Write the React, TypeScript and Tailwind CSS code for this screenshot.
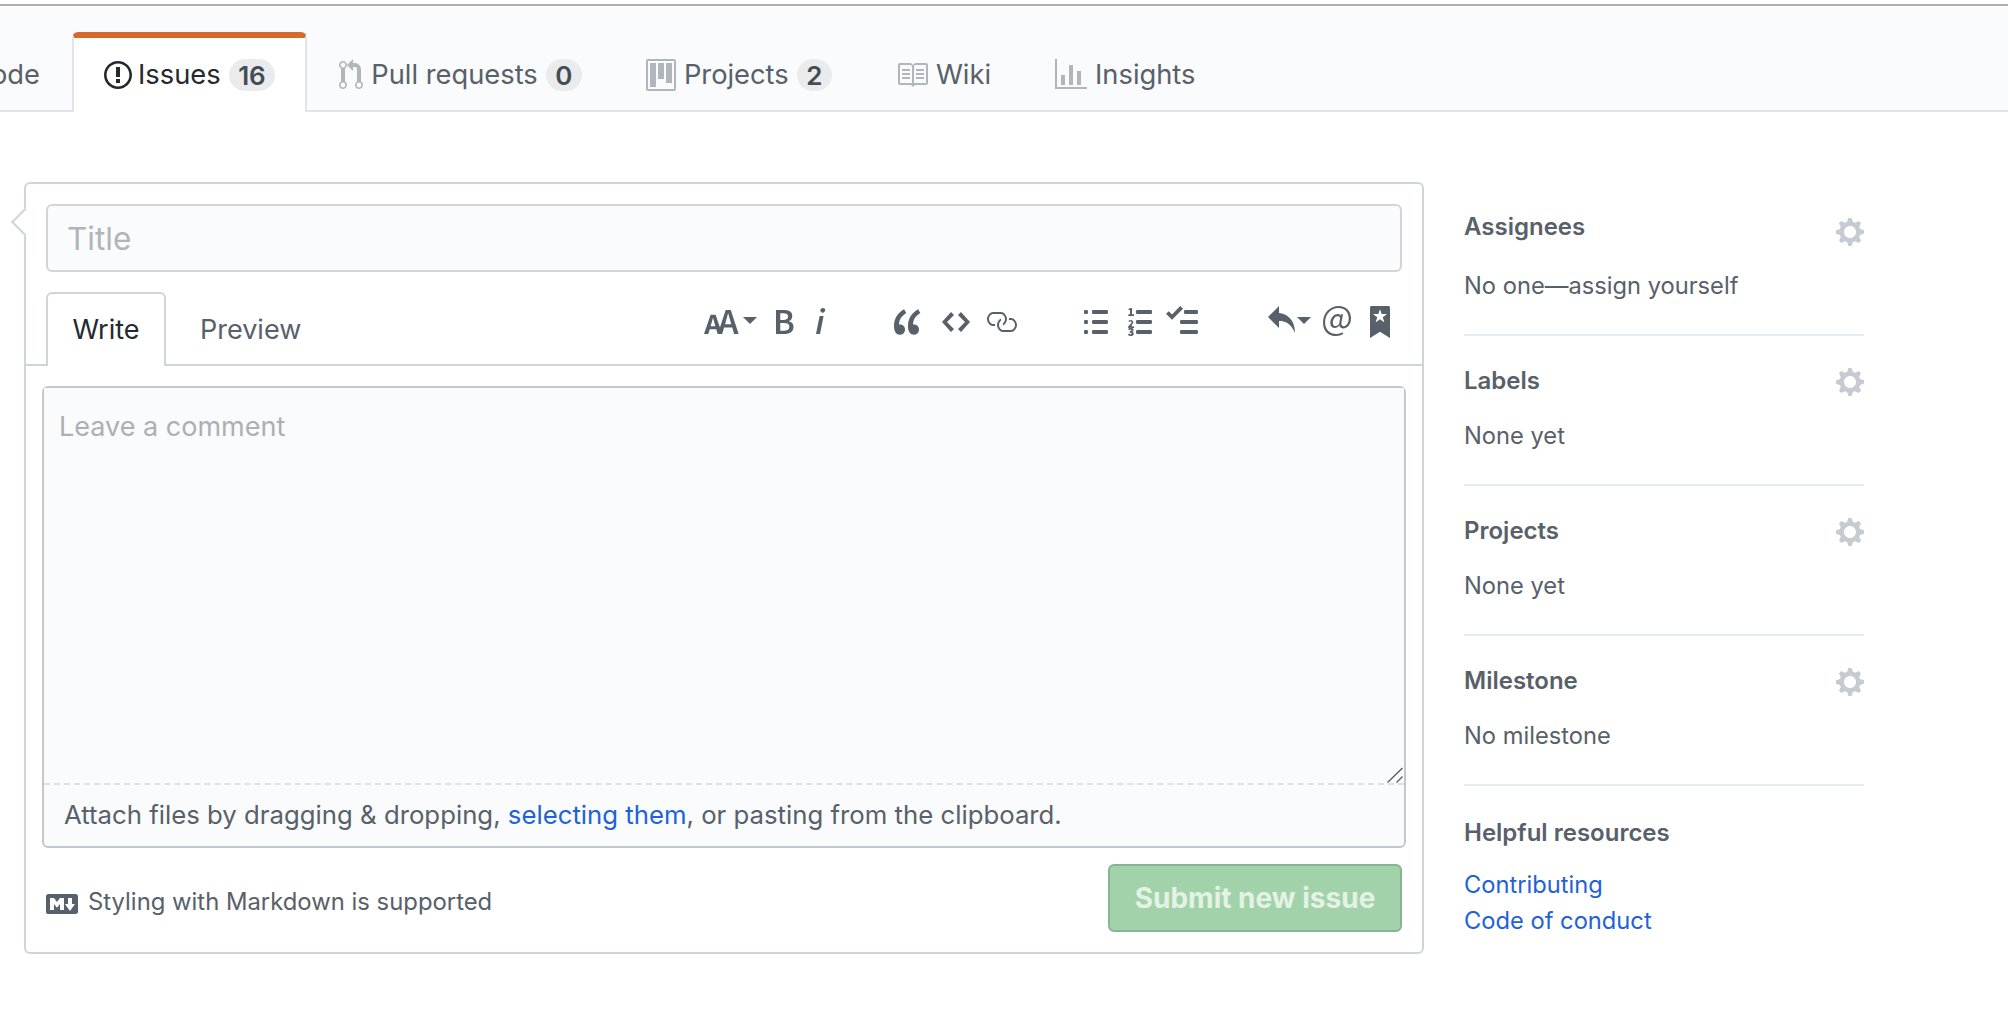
const P: Record<string, [number, string]> = {
  issue: [14, "M7 2.3c3.14 0 5.7 2.56 5.7 5.7s-2.56 5.7-5.7 5.7A5.71 5.71 0 0 1 1.3 8c0-3.14 2.56-5.7 5.7-5.7zM7 1C3.14 1 0 4.14 0 8s3.14 7 7 7 7-3.14 7-7-3.14-7-7-7zm1 3H6v5h2V4zm0 6H6v2h2v-2z"],
  pr: [12, "M11 11.28V5c-.03-.78-.34-1.47-.94-2.06C9.46 2.35 8.78 2.03 8 2H7V0L4 3l3 3V4h1c.27.02.48.11.69.31.21.2.3.42.31.69v6.28A1.993 1.993 0 0 0 10 15a1.993 1.993 0 0 0 1-3.72zm-1 2.92c-.66 0-1.2-.55-1.2-1.2 0-.65.55-1.2 1.2-1.2.65 0 1.2.55 1.2 1.2 0 .65-.55 1.2-1.2 1.2zM4 3c0-1.11-.89-2-2-2a1.993 1.993 0 0 0-1 3.72v6.56A1.993 1.993 0 0 0 2 15a1.993 1.993 0 0 0 1-3.72V4.72c.59-.34 1-.98 1-1.72zm-.8 10c0 .66-.55 1.2-1.2 1.2-.65 0-1.2-.55-1.2-1.2 0-.65.55-1.2 1.2-1.2.65 0 1.2.55 1.2 1.2zM2 4.2C1.34 4.2.8 3.65.8 3c0-.65.55-1.2 1.2-1.2.65 0 1.2.55 1.2 1.2 0 .65-.55 1.2-1.2 1.2z"],
  project: [15, "M10 12h3V2h-3v10zm-4-2h3V2H6v8zm-4 4h3V2H2v12zm-1 1h13V1H1v14zM14 0H1a1 1 0 0 0-1 1v14a1 1 0 0 0 1 1h13a1 1 0 0 0 1-1V1a1 1 0 0 0-1-1z"],
  book: [16, "M3 5h4v1H3V5zm0 3h4V7H3v1zm0 2h4V9H3v1zm11-5h-4v1h4V5zm0 2h-4v1h4V7zm0 2h-4v1h4V9zm2-6v9c0 .55-.45 1-1 1H9.5l-1 1-1-1H2c-.55 0-1-.45-1-1V3c0-.55.45-1 1-1h5.5l1 1 1-1H15c.55 0 1 .45 1 1zm-8 .5L7.5 3H2v9h6V3.5zm7-.5H9.5l-.5.5V12h6V3z"],
  graph: [16, "M16 14v1H0V0h1v14h15zM5 13H3V8h2v5zm4 0H7V3h2v10zm4 0h-2V6h2v7z"],
  textSize: [18, "M13.62 9.08L12.1 3.66h-.06l-1.5 5.42h3.08zM5.7 10.13S4.68 6.52 4.53 6.02h-.08l-1.13 4.11H5.7zM17.31 14h-2.25l-.95-3.25h-4.07L9.09 14H6.84l-.69-2.33H2.87L2.17 14H0l3.3-9.59h2.5l2.17 6.34L10.86 2h2.52l3.94 12h-.01z"],
  bold: [10, "M1 2h3.83c2.48 0 4.3.75 4.3 2.95 0 1.14-.63 2.23-1.67 2.61v.06c1.33.3 2.3 1.23 2.3 2.86 0 2.39-1.97 3.52-4.61 3.52H1V2zm3.66 4.95c1.67 0 2.38-.66 2.38-1.69 0-1.17-.78-1.61-2.34-1.61H3.13v3.3h1.53zm.27 5.39c1.77 0 2.75-.64 2.75-1.98 0-1.27-.95-1.81-2.75-1.81h-1.8v3.8h1.8v-.01z"],
  italic: [6, "M2.81 5h1.98L3 14H1l1.81-9zm.36-2.7c0-.7.58-1.3 1.33-1.3.56 0 1.13.38 1.13 1.03 0 .75-.59 1.3-1.33 1.3-.58 0-1.13-.38-1.13-1.03z"],
  quote: [14, "M6.16 3.5C3.73 5.06 2.55 6.67 2.55 9.36c.16-.05.3-.05.44-.05 1.27 0 2.5.86 2.5 2.41 0 1.61-1.03 2.61-2.5 2.61-1.9 0-2.99-1.52-2.99-4.25 0-3.8 1.75-6.53 5.02-8.42L6.16 3.5zm7 0c-2.43 1.56-3.61 3.17-3.61 5.86.16-.05.3-.05.44-.05 1.27 0 2.5.86 2.5 2.41 0 1.61-1.03 2.61-2.5 2.61-1.89 0-2.98-1.52-2.98-4.25 0-3.8 1.75-6.53 5.02-8.42l1.14 1.84h-.01z"],
  code: [14, "M9.5 3L8 4.5 11.5 8 8 11.5 9.5 13 14 8 9.5 3zm-5 0L0 8l4.5 5L6 11.5 2.5 8 6 4.5 4.5 3z"],
  link: [16, "M4 9h1v1H4c-1.5 0-3-1.69-3-3.5S2.55 3 4 3h4c1.45 0 3 1.69 3 3.5 0 1.41-.91 2.72-2 3.25V8.59c.58-.45 1-1.27 1-2.09C10 5.22 8.98 4 8 4H4c-.98 0-2 1.22-2 2.5S3 9 4 9zm9-3h-1v1h1c1 0 2 1.22 2 2.5S13.98 12 13 12H9c-.98 0-2-1.22-2-2.5 0-.83.42-1.64 1-2.09V6.25c-1.09.53-2 1.84-2 3.25C6 11.31 7.55 13 9 13h4c1.45 0 3-1.69 3-3.5S14.5 6 13 6z"],
  ul: [12, "M2 13c0 .59 0 1-.59 1H.59C0 14 0 13.59 0 13c0-.59 0-1 .59-1h.81c.59 0 .59.41.59 1H2zm2.59-9h6.81c.59 0 .59-.41.59-1 0-.59 0-1-.59-1H4.59C4 2 4 2.41 4 3c0 .59 0 1 .59 1zM1.41 7H.59C0 7 0 7.41 0 8c0 .59 0 1 .59 1h.81c.59 0 .59-.41.59-1 0-.59 0-1-.59-1h.01zm0-5H.59C0 2 0 2.41 0 3c0 .59 0 1 .59 1h.81c.59 0 .59-.41.59-1 0-.59 0-1-.59-1h.01zm10 5H4.59C4 7 4 7.41 4 8c0 .59 0 1 .59 1h6.81c.59 0 .59-.41.59-1 0-.59 0-1-.59-1h.01zm0 5H4.59C4 12 4 12.41 4 13c0 .59 0 1 .59 1h6.81c.59 0 .59-.41.59-1 0-.59 0-1-.59-1h.01z"],
  ol: [12, "M12.01 13c0 .59 0 1-.59 1H4.6c-.59 0-.59-.41-.59-1 0-.59 0-1 .59-1h6.81c.59 0 .59.41.59 1h.01zM4.6 4h6.81C12 4 12 3.59 12 3c0-.59 0-1-.59-1H4.6c-.59 0-.59.41-.59 1 0 .59 0 1 .59 1zm6.81 3H4.6c-.59 0-.59.41-.59 1 0 .59 0 1 .59 1h6.81C12 9 12 8.59 12 8c0-.59 0-1-.59-1zm-9.4-6h-.72c-.3.19-.58.25-1.03.34V2h.75v2.14H.17V5h2.84v-.86h-1V1zm.19 8.75c-.17 0-.42.02-.61.05.48-.5 1.02-1.09 1.02-1.64C2.61 7.47 2.13 7 1.39 7c-.53 0-.88.18-1.24.58l.48.48c.19-.2.38-.38.64-.38.28 0 .48.17.48.5 0 .53-.77 1.14-1.66 2.04V11h3v-.78l-.99.02-.01-.49zm-.08 3.17v-.03c.44-.19.64-.47.64-.86 0-.7-.56-1.11-1.44-1.11-.48 0-.89.19-1.28.52l.55.64c.25-.2.44-.31.69-.31.27 0 .42.13.42.36 0 .27-.2.44-.86.44v.75c.83 0 .98.17.98.47 0 .25-.23.38-.58.38-.28 0-.56-.14-.81-.38l-.48.66c.3.36.77.56 1.41.56.83 0 1.53-.41 1.53-1.16 0-.5-.31-.81-.77-.94v.01z"],
  task: [16, "M15.41 9H7.59C7 9 7 8.59 7 8c0-.59 0-1 .59-1h7.81c.59 0 .59.41.59 1 0 .59 0 1-.59 1h.01zM9.59 4C9 4 9 3.59 9 3c0-.59 0-1 .59-1h5.81c.59 0 .59.41.59 1 0 .59 0 1-.59 1H9.59zM0 3.91l1.41-1.3L3 4.2 7.09 0 8.5 1.41 3 6.91l-3-3zM7.59 12h7.81c.59 0 .59.41.59 1 0 .59 0 1-.59 1H7.59C7 14 7 13.59 7 13c0-.59 0-1 .59-1z"],
  reply: [14, "M6 3.5c3.92.44 8 3.125 8 10-2.312-5.062-4.75-6-8-6V11L.5 5.5 6 0v3.5z"],
  mention: [14, "M6.58 15c1.25 0 2.52-.31 3.56-.94l-.42-.94c-.84.52-1.89.83-3.03.83-3.23 0-5.64-2.08-5.64-5.72 0-4.37 3.23-7.18 6.58-7.18 3.45 0 5.22 2.19 5.22 5.2 0 2.39-1.34 3.86-2.5 3.86-1.05 0-1.36-.73-1.05-2.19l.73-3.75H8.98l-.11.72c-.41-.63-.94-.83-1.56-.83-2.19 0-3.66 2.39-3.66 4.38 0 1.67.94 2.61 2.3 2.61.84 0 1.67-.53 2.3-1.25.11.94.94 1.45 1.98 1.45 1.67 0 3.77-1.67 3.77-5C14 2.61 11.59 0 7.83 0 3.66 0 0 3.33 0 8.33 0 12.71 2.92 15 6.58 15zm-.31-5c-.73 0-1.36-.52-1.36-1.67 0-1.45.94-3.22 2.41-3.22.52 0 .84.2 1.25.83l-.52 3.02c-.63.73-1.25 1.04-1.78 1.04z"],
  bookmark: [10, "M9 0H1C.27 0 0 .27 0 1v15l5-3.09L10 16V1c0-.73-.27-1-1-1zm-.78 4.25L6.36 5.61l.72 2.16c.06.22-.02.28-.2.17L5 6.6 3.12 7.94c-.19.11-.25.05-.2-.17l.72-2.16-1.86-1.36c-.17-.16-.14-.23.09-.23l2.3-.03.7-2.16h.25l.7 2.16 2.3.03c.23 0 .27.08.09.23h.01z"],
  markdown: [16, "M14.85 3H1.15C.52 3 0 3.52 0 4.15v7.69C0 12.48.52 13 1.15 13h13.69c.64 0 1.15-.52 1.15-1.15v-7.7C16 3.52 15.48 3 14.85 3zM9 11H7V8L5.5 9.92 4 8v3H2V5h2l1.5 2L7 5h2v6zm2.99.5L9.5 8H11V5h2v3h1.5l-2.51 3.5z"],
  gear: [14, "M14 8.77v-1.6l-1.94-.64-.45-1.09.88-1.84-1.13-1.13-1.81.91-1.09-.45-.69-1.92h-1.6l-.63 1.94-1.11.45-1.84-.88-1.13 1.13.91 1.81-.45 1.09L0 7.23v1.59l1.94.64.45 1.09-.88 1.84 1.13 1.13 1.81-.91 1.09.45.69 1.92h1.59l.63-1.94 1.11-.45 1.84.88 1.13-1.13-.92-1.81.47-1.09L14 8.75v.02zM7 11c-1.66 0-3-1.34-3-3s1.34-3 3-3 3 1.34 3 3-1.34 3-3 3z"],
};

function Octi({ name, className = "" }: { name: string; className?: string }) {
  const [w, d] = P[name];
  return (
    <svg viewBox={`0 0 ${w} 16`} width={w * 2} height={32} fill="currentColor" className={`block shrink-0 ${className}`}>
      <path fillRule="evenodd" d={d} />
    </svg>
  );
}

function Caret({ className = "" }: { className?: string }) {
  return (
    <svg viewBox="0 0 14 7" width={14} height={7} fill="currentColor" className={`block shrink-0 ${className}`}>
      <path d="M0 0h14L7 7z" />
    </svg>
  );
}

function Count({ children }: { children: string }) {
  return (
    <span className="ml-[8px] flex h-[32px] items-center justify-center rounded-full bg-[#e9ebed] px-[9.5px] text-[26px] font-semibold text-[#444d56]">
      {children}
    </span>
  );
}

function NavTab({ icon, label, count }: { icon: string; label: string; count?: string }) {
  return (
    <div className="flex h-[80px] items-center pl-[32px] pr-[32px] pt-[6px] text-[#586069]">
      <Octi name={icon} className="text-[#b1b6bc]" />
      <span className="ml-[8px]">{label}</span>
      {count && <Count>{count}</Count>}
    </div>
  );
}

function Section({ title, body, first }: { title: string; body: string; first?: boolean }) {
  return (
    <div className="border-b-2 border-[#e6ebf1] pb-[30px] pt-[29px]">
      <div className="flex h-[32px] items-start justify-between">
        <span className="text-[24px] font-semibold leading-[32px] text-[#586069]">{title}</span>
        <Octi name="gear" className={first ? "mt-[5px] text-[#c6cbd1]" : "mt-[1px] text-[#c6cbd1]"} />
      </div>
      <div className={`${first ? "mt-[25px]" : "mt-[21px]"} text-[23.7px] leading-[36px] text-[#586069]`}>{body}</div>
    </div>
  );
}

export default function App() {
  return (
    <div className="min-h-[1020px] overflow-hidden bg-white font-[Inter,sans-serif] text-[#24292e]">
      <div className="h-[4px] bg-white" />
      <div className="flex h-[108px] items-end border-b-2 border-t-2 border-b-[#e1e4e8] border-t-[#b0b0b0] bg-[#fafbfc] text-[27.3px]">
        <div className="-mb-[2px] flex h-[80px] w-[72px] shrink-0 items-center justify-end overflow-hidden pr-[32px] pt-[6px] text-[#586069]">
          <span className="shrink-0">Code</span>
        </div>
        <div className="relative z-10 -mb-[2px] flex h-[80px] items-center rounded-t-[6px] border-x-2 border-t-[6px] border-x-[#e1e4e8] border-t-[#d66a2c] bg-white px-[30px] text-[#24292e]">
          <Octi name="issue" />
          <span className="ml-[6px]">Issues</span>
          <Count>16</Count>
        </div>
        <div className="-mb-[2px] flex">
          <NavTab icon="pr" label="Pull requests" count="0" />
          <NavTab icon="project" label="Projects" count="2" />
          <NavTab icon="book" label="Wiki" />
          <NavTab icon="graph" label="Insights" />
        </div>
      </div>

      <div className="mt-[70px] flex items-start pl-[24px]">
        <div className="relative h-[772px] w-[1400px] shrink-0 rounded-[6px] border-2 border-[#d1d5da] bg-white">
          <div className="absolute left-[-11px] top-[28px] h-[20px] w-[20px] rotate-45 border-b-2 border-l-2 border-[#d1d5da] bg-white" />
          <div className="relative px-[20px] pt-[20px]">
            <input
              placeholder="Title"
              className="block h-[68px] w-full rounded-[6px] border-2 border-[#d1d5da] bg-[#fafbfc] px-[19px] text-[31.5px] placeholder:text-[#b0b5bb]"
            />
          </div>
          <div className="mt-[20px] flex h-[74px] items-start border-b-2 border-[#d1d5da] pl-[20px] pr-[32px]">
            <div className="relative flex h-[74px] w-[120px] items-center justify-center rounded-t-[6px] border-x-2 border-t-2 border-[#d1d5da] bg-white text-[27px] text-[#24292e]">
              Write
            </div>
            <div className="ml-[34px] flex h-[72px] items-center pt-[4px] text-[27px] text-[#586069]">Preview</div>
            <div className="ml-auto mt-[14px] flex items-start text-[#586069]">
              <Octi name="textSize" />
              <Caret className="ml-[3px] mt-[11px]" />
              <Octi name="bold" className="ml-[17px]" />
              <Octi name="italic" className="ml-[20px]" />
              <Octi name="quote" className="ml-[68px]" />
              <Octi name="code" className="ml-[20px]" />
              <Octi name="link" className="ml-[15px]" />
              <Octi name="ul" className="ml-[67px]" />
              <Octi name="ol" className="ml-[20px]" />
              <Octi name="task" className="ml-[14px]" />
              <Octi name="reply" className="ml-[69px]" />
              <Caret className="ml-[2px] mt-[11px]" />
              <Octi name="mention" className="ml-[12px]" />
              <Octi name="bookmark" className="ml-[19px]" />
            </div>
          </div>
          <div className="mx-[16px] mt-[20px] rounded-[6px] border-2 border-[#c3c8cf] bg-[#fafbfc]">
            <div className="relative">
              <textarea
                placeholder="Leave a comment"
                className="block h-[397px] w-full resize-none border-b-2 border-dashed border-[#dfe2e5] bg-[#fafbfc] px-[15px] py-[20px] text-[27px] leading-[38px] outline-none placeholder:text-[#abb0b6]"
              />
              <svg viewBox="0 0 16 16" width={16} height={16} className="absolute bottom-[2px] right-[1px]" stroke="#5a5a5a" strokeWidth={1.3} fill="none">
                <path d="M0.5 15.5L15.5 1M9.5 15.5L15.5 9.5" />
              </svg>
            </div>
            <div className="flex h-[61px] items-center pl-[20px] text-[25.75px] text-[#586069]">
              <span>
                Attach files by dragging &amp; dropping, <span className="text-[#1f62d6]">selecting them</span>, or pasting from the clipboard.
              </span>
            </div>
          </div>
          <div className="mt-[16px] flex items-center justify-between px-[20px]">
            <div className="mt-[7px] flex items-center text-[23.85px] text-[#586069]">
              <Octi name="markdown" className="mt-[5px]" />
              <span className="ml-[10px]">Styling with Markdown is supported</span>
            </div>
            <button className="h-[68px] w-[294px] rounded-[6px] border-2 border-[#8ab394] bg-[#a2d2a9] text-[28px] font-bold text-[#e4f2e6]">
              Submit new issue
            </button>
          </div>
        </div>

        <div className="ml-[40px] w-[400px] shrink-0">
          <Section title="Assignees" body="No one—assign yourself" first />
          <Section title="Labels" body="None yet" />
          <Section title="Projects" body="None yet" />
          <Section title="Milestone" body="No milestone" />
          <div className="pt-[31px]">
            <div className="text-[24px] font-semibold leading-[32px] text-[#586069]">Helpful resources</div>
            <div className="mt-[18px] text-[23.7px] leading-[36px] text-[#1f62d6]">
              <div>Contributing</div>
              <div>Code of conduct</div>
            </div>
          </div>
        </div>
      </div>
    </div>
  );
}
